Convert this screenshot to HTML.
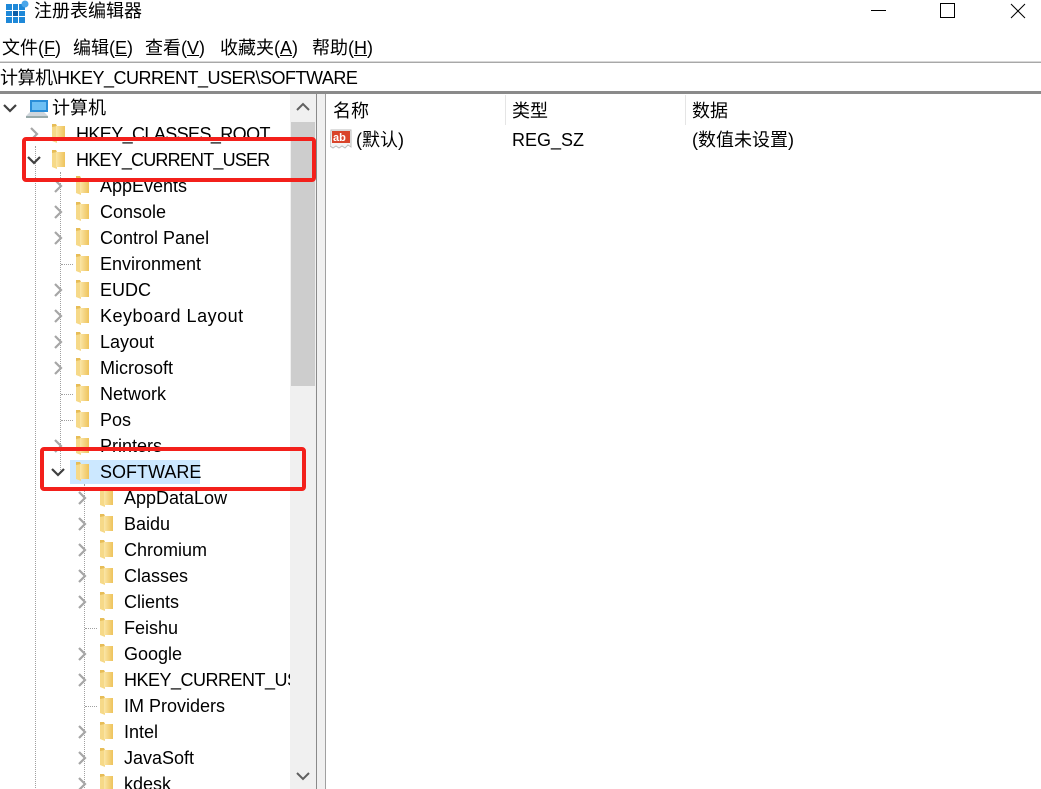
<!DOCTYPE html>
<html><head><meta charset="utf-8"><style>
*{margin:0;padding:0;box-sizing:border-box}
body{width:1041px;height:789px;overflow:hidden;background:#fff;position:relative;font-family:"Liberation Sans","Microsoft YaHei","Noto Sans CJK SC",sans-serif;font-size:18px;color:#000}
.a{position:absolute;white-space:nowrap}
.row{position:absolute;height:26px;line-height:26px;white-space:nowrap}
.dv{position:absolute;width:0;border-left:1px dotted #a0a0a0}
.dh{position:absolute;height:0;border-top:1px dotted #a0a0a0}
</style></head><body>
<svg class="a" style="left:5px;top:0" width="24" height="24" viewBox="0 0 24 24">
<rect x="1" y="4" width="19" height="19" fill="#1e88d8"/>
<g stroke="#fff" stroke-width="1"><line x1="7.5" y1="4" x2="7.5" y2="23"/><line x1="13.5" y1="4" x2="13.5" y2="23"/><line x1="1" y1="10.5" x2="20" y2="10.5"/><line x1="1" y1="16.5" x2="20" y2="16.5"/></g>
<rect x="8" y="11" width="5" height="5" fill="#0d5fa8"/>
<circle cx="20" cy="4" r="3.5" fill="#4aa6ea"/>
</svg>
<div class="a" style="left:34px;top:0;line-height:22px">注册表编辑器</div>
<div class="a" style="left:871px;top:10px;width:15px;border-top:1px solid #000"></div>
<div class="a" style="left:940px;top:3px;width:15px;height:15px;border:1px solid #000"></div>
<svg class="a" style="left:1010px;top:3px" width="16" height="16"><path d="M1 1L15 15M15 1L1 15" stroke="#000" stroke-width="1"/></svg>
<div class="a" style="left:2px;top:36px;line-height:24px">文件(<u>F</u>)</div>
<div class="a" style="left:73px;top:36px;line-height:24px">编辑(<u>E</u>)</div>
<div class="a" style="left:145px;top:36px;line-height:24px">查看(<u>V</u>)</div>
<div class="a" style="left:220px;top:36px;line-height:24px">收藏夹(<u>A</u>)</div>
<div class="a" style="left:312px;top:36px;line-height:24px">帮助(<u>H</u>)</div>
<div class="a" style="left:0;top:61px;width:1041px;height:2px;background:#a8a8a8;border-top:1px solid #d8d8d8"></div>
<div class="a" style="left:0;top:66px;line-height:24px;letter-spacing:-0.5px">计算机\HKEY_CURRENT_USER\SOFTWARE</div>
<div class="a" style="left:0;top:91px;width:1041px;height:3px;background:#8a8a8a"></div>
<div class="a" style="left:290px;top:94px;width:26px;height:695px;background:#f0f0f0"></div>
<div class="a" style="left:291px;top:122px;width:24px;height:264px;background:#cdcdcd"></div>
<svg class="a" style="left:296px;top:102px" width="14" height="10"><path d="M1 8L7 2L13 8" stroke="#606060" stroke-width="2" fill="none"/></svg>
<svg class="a" style="left:296px;top:771px" width="14" height="10"><path d="M1 2L7 8L13 2" stroke="#606060" stroke-width="2" fill="none"/></svg>
<div class="a" style="left:316px;top:94px;width:10px;height:695px;background:#f0f0f0;border-left:1px solid #8a8a8a;border-right:1px solid #a0a0a0"></div>
<div class="a" style="left:333px;top:98px;line-height:26px">名称</div>
<div class="a" style="left:505px;top:95px;height:30px;border-left:1px solid #e5e5e5"></div>
<div class="a" style="left:512px;top:98px;line-height:26px">类型</div>
<div class="a" style="left:685px;top:95px;height:30px;border-left:1px solid #e5e5e5"></div>
<div class="a" style="left:692px;top:98px;line-height:26px">数据</div>
<svg class="a" style="left:330px;top:128px" width="24" height="22"><path d="M1 2h20v17l-3-2-3 3-3-2-3 2-3-2-3 2-3-2z" fill="#f4f4f4" stroke="#bbb"/><rect x="2" y="3" width="18" height="12" fill="#d9442a"/><text x="3" y="13" font-size="11" font-weight="bold" fill="#fff" font-family="Liberation Sans">ab</text></svg>
<div class="a" style="left:356px;top:127px;line-height:26px">(默认)</div>
<div class="a" style="left:512px;top:127px;line-height:26px">REG_SZ</div>
<div class="a" style="left:692px;top:127px;line-height:26px">(数值未设置)</div>
<div class="a" style="left:0;top:94px;width:290px;height:695px;overflow:hidden">
<div class="dv" style="left:35px;top:52px;height:650px"></div>
<div class="dv" style="left:60px;top:78px;height:300px"></div>
<div class="dv" style="left:84px;top:390px;height:310px"></div>
<div class="dh" style="left:61px;top:170px;width:12px"></div>
<div class="dh" style="left:61px;top:300px;width:12px"></div>
<div class="dh" style="left:61px;top:326px;width:12px"></div>
<div class="dh" style="left:85px;top:534px;width:12px"></div>
<div class="dh" style="left:85px;top:612px;width:12px"></div>
<div class="a" style="left:70px;top:366px;width:130px;height:24px;background:#cce8ff"></div>
<svg width="290" height="695" style="position:absolute;left:0;top:0">
<defs>
<linearGradient id="g" x1="0" x2="1"><stop offset="0" stop-color="#fbe6a6"/><stop offset="1" stop-color="#eec35c"/></linearGradient>
<g id="f"><path d="M0 0h4l1 2h7v15H0z" fill="#e7bd57"/><path d="M0 3l5-1v17l-5-2z" fill="#f6d988"/><rect x="4" y="2" width="9" height="15" fill="url(#g)"/></g>
<path id="c" d="M-1 -2l6 6l-6 6" stroke="#a6a6a6" stroke-width="2.2" fill="none"/>
<path id="d" d="M-1 0l6 6l6-6" stroke="#404040" stroke-width="2.2" fill="none"/>
</defs>
<use href="#d" x="5" y="11"/>
<g transform="translate(28,5)"><rect x="2" y="1" width="18" height="12" fill="#2a8ed8"/><rect x="4" y="3" width="14" height="8" fill="#6ec0f4"/><path d="M-2 17h22l-4-4H2z" fill="#cfd6dc"/><rect x="-2" y="17" width="22" height="2" fill="#9aa"/></g>
<use href="#c" x="32" y="36"/><use href="#f" x="52" y="30"/>
<use href="#d" x="29" y="63"/><use href="#f" x="52" y="56"/>
<use href="#c" x="56" y="88"/><use href="#f" x="76" y="82"/>
<use href="#c" x="56" y="114"/><use href="#f" x="76" y="108"/>
<use href="#c" x="56" y="140"/><use href="#f" x="76" y="134"/>
<use href="#f" x="76" y="160"/>
<use href="#c" x="56" y="192"/><use href="#f" x="76" y="186"/>
<use href="#c" x="56" y="218"/><use href="#f" x="76" y="212"/>
<use href="#c" x="56" y="244"/><use href="#f" x="76" y="238"/>
<use href="#c" x="56" y="270"/><use href="#f" x="76" y="264"/>
<use href="#f" x="76" y="290"/>
<use href="#f" x="76" y="316"/>
<use href="#c" x="56" y="348"/><use href="#f" x="76" y="342"/>
<use href="#d" x="53" y="375"/><use href="#f" x="76" y="368"/>
<use href="#c" x="80" y="400"/><use href="#f" x="100" y="394"/>
<use href="#c" x="80" y="426"/><use href="#f" x="100" y="420"/>
<use href="#c" x="80" y="452"/><use href="#f" x="100" y="446"/>
<use href="#c" x="80" y="478"/><use href="#f" x="100" y="472"/>
<use href="#c" x="80" y="504"/><use href="#f" x="100" y="498"/>
<use href="#f" x="100" y="524"/>
<use href="#c" x="80" y="556"/><use href="#f" x="100" y="550"/>
<use href="#c" x="80" y="582"/><use href="#f" x="100" y="576"/>
<use href="#f" x="100" y="602"/>
<use href="#c" x="80" y="634"/><use href="#f" x="100" y="628"/>
<use href="#c" x="80" y="660"/><use href="#f" x="100" y="654"/>
<use href="#c" x="80" y="686"/><use href="#f" x="100" y="680"/>
</svg>
<div class="row" style="left:52px;top:1px">计算机</div>
<div class="row" style="left:76px;top:27px;letter-spacing:-0.6px">HKEY_CLASSES_ROOT</div>
<div class="row" style="left:76px;top:53px;letter-spacing:-0.8px">HKEY_CURRENT_USER</div>
<div class="row" style="left:100px;top:79px">AppEvents</div>
<div class="row" style="left:100px;top:105px">Console</div>
<div class="row" style="left:100px;top:131px">Control Panel</div>
<div class="row" style="left:100px;top:157px">Environment</div>
<div class="row" style="left:100px;top:183px">EUDC</div>
<div class="row" style="left:100px;top:209px;letter-spacing:0.5px">Keyboard Layout</div>
<div class="row" style="left:100px;top:235px">Layout</div>
<div class="row" style="left:100px;top:261px">Microsoft</div>
<div class="row" style="left:100px;top:287px">Network</div>
<div class="row" style="left:100px;top:313px">Pos</div>
<div class="row" style="left:100px;top:339px">Printers</div>
<div class="row" style="left:100px;top:365px">SOFTWARE</div>
<div class="row" style="left:124px;top:391px">AppDataLow</div>
<div class="row" style="left:124px;top:417px">Baidu</div>
<div class="row" style="left:124px;top:443px">Chromium</div>
<div class="row" style="left:124px;top:469px">Classes</div>
<div class="row" style="left:124px;top:495px">Clients</div>
<div class="row" style="left:124px;top:521px">Feishu</div>
<div class="row" style="left:124px;top:547px">Google</div>
<div class="row" style="left:124px;top:573px;letter-spacing:-0.5px">HKEY_CURRENT_USER</div>
<div class="row" style="left:124px;top:599px">IM Providers</div>
<div class="row" style="left:124px;top:625px">Intel</div>
<div class="row" style="left:124px;top:651px">JavaSoft</div>
<div class="row" style="left:124px;top:677px">kdesk</div>
</div>
<div class="a" style="left:22px;top:137px;width:294px;height:45px;border:4px solid #f3201b;border-radius:4px"></div>
<div class="a" style="left:40px;top:447px;width:266px;height:44px;border:4px solid #f3201b;border-radius:4px"></div>
</body></html>
